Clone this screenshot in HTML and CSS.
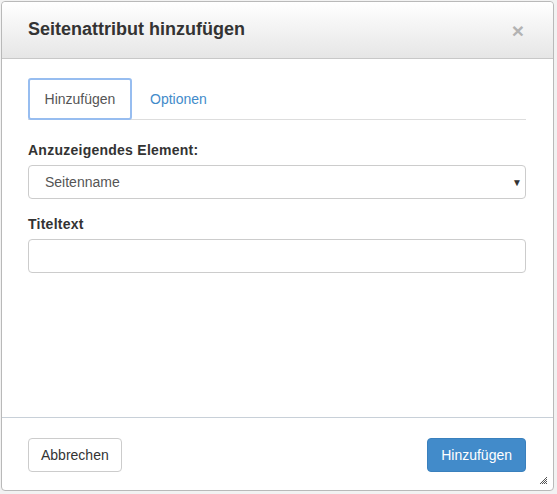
FILE: index.html
```html
<!DOCTYPE html>
<html lang="de">
<head>
<meta charset="utf-8">
<title>Seitenattribut hinzufügen</title>
<link rel="stylesheet" href="styles.css">
</head>
<body>
<div class="page">
  <div class="dialog">
    <div class="dialog-header">
      <h4 class="dialog-title">Seitenattribut hinzufügen</h4>
      <span class="close">×</span>
    </div>
    <div class="dialog-body">
      <ul class="tabs">
        <li class="tab active">Hinzufügen</li>
        <li class="tab">Optionen</li>
      </ul>
      <label class="field-label">Anzuzeigendes Element:</label>
      <div class="select">
        <span class="select-value">Seitenname</span>
        <span class="select-arrow">▼</span>
      </div>
      <label class="field-label second">Titeltext</label>
      <div class="input"></div>
    </div>
    <div class="dialog-footer">
      <button class="btn">Abbrechen</button>
      <button class="btn primary">Hinzufügen</button>
      <svg class="grip" width="9" height="9" viewBox="0 0 9 9">
        <path d="M8 1L1 8M8 3L3 8M8 5L5 8M8 7L7 8" stroke="#555" stroke-width="1"/>
      </svg>
    </div>
  </div>
</div>
</body>
</html>
```

FILE: styles.css
```css
html, body {
  margin: 0;
  padding: 0;
}
body {
  background: #f2f2f2;
  font-family: "Liberation Sans", Arial, sans-serif;
  font-size: 14px;
  color: #333;
}
.page {
  display: flex;
  padding: 1px 0 0 1px;
  height: 493px;
  overflow: hidden;
}
.dialog {
  width: 551px;
  height: 488px;
  border: 1px solid #b9b9b9;
  border-radius: 4px;
  background: #fff;
  display: flex;
  flex-direction: column;
  flex-shrink: 0;
  position: relative;
}
.dialog-header {
  height: 56px;
  border-bottom: 1px solid #c8c8c8;
  background: linear-gradient(#ffffff, #e6e6e6);
  border-radius: 4px 4px 0 0;
  display: flex;
  align-items: center;
  padding: 0 27px 0 26px;
}
.dialog-title {
  margin: 0;
  font-size: 18px;
  font-weight: bold;
  color: #333;
  flex: 1;
  padding-bottom: 2px;
}
.close {
  font-size: 21px;
  font-weight: bold;
  color: #b3b3b3;
  line-height: 1;
  padding-right: 2px;
}
.dialog-body {
  flex: 1;
  padding: 19px 27px 0 26px;
}
.tabs {
  list-style: none;
  margin: 0;
  padding: 0;
  display: flex;
  border-bottom: 1px solid #dddddd;
  height: 41px;
}
.tab {
  height: 41px;
  box-sizing: border-box;
  padding: 0 16px;
  display: flex;
  align-items: center;
  color: #428bca;
  margin-right: 2px;
}
.tab.active {
  width: 104px;
  justify-content: center;
  padding: 0;
  border: 2px solid #97bdf0;
  border-radius: 3px;
  color: #555;
  height: 42px;
}
.field-label {
  display: block;
  font-weight: bold;
  font-size: 14px;
  line-height: 20px;
  letter-spacing: 0.25px;
  margin-top: 20px;
  margin-bottom: 5px;
  color: #333;
}
.field-label.second {
  margin-top: 15px;
}
.select, .input {
  height: 34px;
  box-sizing: border-box;
  border: 1px solid #cccccc;
  border-radius: 4px;
  background: #fff;
}
.select {
  display: flex;
  align-items: center;
  padding: 0 6px 0 16px;
}
.select-value {
  flex: 1;
  color: #555;
}
.select-arrow {
  font-size: 10px;
  color: #333;
  margin-right: -3px;
}
.dialog-footer {
  height: 73px;
  box-sizing: border-box;
  border-top: 1px solid #c8d0d8;
  padding: 20px 27px 0 26px;
  display: flex;
  justify-content: space-between;
  align-items: flex-start;
  position: relative;
}
.btn {
  height: 34px;
  font-family: "Liberation Sans", Arial, sans-serif;
  font-size: 14px;
  padding: 0 12px;
  border-radius: 4px;
  border: 1px solid #cccccc;
  background: #fff;
  color: #333;
}
.btn.primary {
  background: #428bca;
  border-color: #3a80bd;
  color: #fff;
  padding: 0 13px;
}
.grip {
  position: absolute;
  right: 5px;
  bottom: 5px;
}
```
